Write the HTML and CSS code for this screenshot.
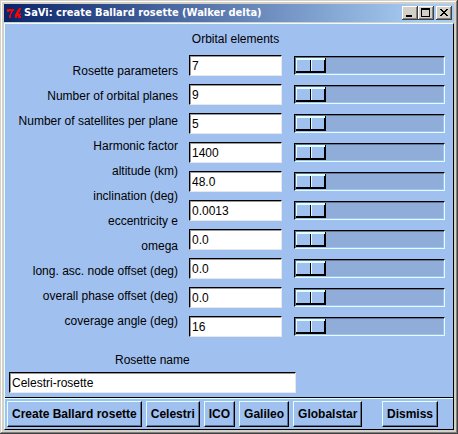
FILE: index.html
```html
<!DOCTYPE html>
<html lang="en">
<head>
<meta charset="utf-8">
<title>SaVi: create Ballard rosette (Walker delta)</title>
<link rel="stylesheet" href="styles.css">
</head>
<body>
<div class="window">
  <header class="titlebar">
    <svg class="logo" viewBox="0 0 15 11" width="15" height="11" aria-hidden="true">
      <path d="M0 1h7v2H6v1H5v2H4v4H2V7h1V5h1V3H2v1H0zM12 0h2v2h-1v2h-1v2h1V5h1v2h-1v1h1v2h-3V8h-1v2H8V6h1V4h1V2h1V1h1z"/>
    </svg>
    <h1 class="title">SaVi: create Ballard rosette (Walker delta)</h1>
    <div class="controls">
      <button class="control" type="button" aria-label="Minimize"><svg viewBox="0 0 12 10" width="12" height="10"><path d="M2 7h6v2H2z"/></svg></button>
      <button class="control" type="button" aria-label="Maximize"><svg viewBox="0 0 12 10" width="12" height="10"><path fill-rule="evenodd" d="M1 0h9v9H1zM2 2v6h7V2z"/></svg></button>
      <button class="control close" type="button" aria-label="Close"><svg viewBox="0 0 12 10" width="12" height="10"><path d="M2 1h2v1h1v1h2V2h1V1h2v1H9v1H8v1H7v1h1v1h1v1h1v1H8V7H7V6H5v1H4v1H2V7h1V6h1V5h1V4H4V3H3V2H2z"/></svg></button>
    </div>
  </header>
  <form class="client">
    <div class="panel">
      <div class="names">
        <span>Rosette parameters</span>
        <label for="planes">Number of orbital planes</label>
        <label for="sats">Number of satellites per plane</label>
        <label for="harmonic">Harmonic factor</label>
        <label for="altitude">altitude (km)</label>
        <label for="inclination">inclination (deg)</label>
        <label for="ecc">eccentricity e</label>
        <label for="omega">omega</label>
        <label for="node">long. asc. node offset (deg)</label>
        <label for="phase">overall phase offset (deg)</label>
        <label for="coverage">coverage angle (deg)</label>
      </div>
      <div class="values">
        <span class="heading">Orbital elements</span>
        <input class="entry" id="planes" value="7">
        <input class="entry" id="sats" value="9">
        <input class="entry" id="harmonic" value="5">
        <input class="entry" id="altitude" value="1400">
        <input class="entry" id="inclination" value="48.0">
        <input class="entry" id="ecc" value="0.0013">
        <input class="entry" id="omega" value="0.0">
        <input class="entry" id="node" value="0.0">
        <input class="entry" id="phase" value="0.0">
        <input class="entry" id="coverage" value="16">
      </div>
      <div class="sliders">
        <input class="slider" type="range" value="0" aria-label="Number of orbital planes">
        <input class="slider" type="range" value="0" aria-label="Number of satellites per plane">
        <input class="slider" type="range" value="0" aria-label="Harmonic factor">
        <input class="slider" type="range" value="0" aria-label="altitude (km)">
        <input class="slider" type="range" value="0" aria-label="inclination (deg)">
        <input class="slider" type="range" value="0" aria-label="eccentricity e">
        <input class="slider" type="range" value="0" aria-label="omega">
        <input class="slider" type="range" value="0" aria-label="long. asc. node offset (deg)">
        <input class="slider" type="range" value="0" aria-label="overall phase offset (deg)">
        <input class="slider" type="range" value="0" aria-label="coverage angle (deg)">
      </div>
    </div>
    <div class="rosette">
      <label for="name">Rosette name</label>
      <input class="entry" id="name" value="Celestri-rosette">
    </div>
    <div class="actions">
      <button class="action" type="button">Create Ballard rosette</button>
      <button class="action" type="button">Celestri</button>
      <button class="action" type="button">ICO</button>
      <button class="action" type="button">Galileo</button>
      <button class="action" type="button">Globalstar</button>
      <button class="action dismiss" type="button">Dismiss</button>
    </div>
  </form>
</div>
</body>
</html>
```
FILE: styles.css
```css
* { box-sizing: border-box; }

:root {
  --face: #d4d0c8;
  --blue: #a0c0f0;
  --light: #e0ffff;
  --shade: #607390;
}

body {
  margin: 0;
  background: var(--face);
  color: #000;
  font: 12px/15px "Liberation Sans", Arial, sans-serif;
}

input, button { font: inherit; color: inherit; margin: 0; }

.window {
  min-height: 100vh;
  display: flex;
  flex-direction: column;
  padding: 4px;
  background: var(--face);
  box-shadow: inset -1px -1px #404040, inset 1px 1px var(--face),
    inset -2px -2px #808080, inset 2px 2px #fff;
}

.titlebar {
  display: flex;
  align-items: center;
  height: 18px;
  padding: 0 2px 0 3px;
  background: linear-gradient(to right, #0a246a, #a6caf0 92%);
}

.logo { flex: none; fill: #f00; }

.title {
  flex: 1;
  margin: 0 0 0 2px;
  color: #fff;
  font: bold 11px/16px "DejaVu Sans Condensed", "Noto Sans", sans-serif;
  white-space: nowrap;
}

.controls { display: flex; }

.control {
  display: block;
  width: 16px;
  height: 14px;
  padding: 2px;
  border: 0;
  background: var(--face);
  box-shadow: inset -1px -1px #404040, inset 1px 1px #fff, inset -2px -2px #808080;
}

.control svg { display: block; shape-rendering: crispEdges; }
.close { margin-left: 2px; }

.client {
  flex: 1;
  display: flex;
  flex-direction: column;
  margin-top: 1px;
  border: 1px solid;
  border-color: var(--light) #000 #000 var(--light);
  background: var(--blue);
}

.panel {
  display: grid;
  grid-template-columns: 173px 93px 1fr;
  padding: 8px 8px 0 0;
}

.names {
  display: flex;
  flex-direction: column;
  gap: 10px;
  padding-top: 32px;
  text-align: right;
}

.values, .sliders { display: flex; flex-direction: column; }
.values { gap: 8px; margin-left: 11px; margin-right: -11px; }
.heading { text-align: center; white-space: nowrap; }

.entry {
  width: 100%;
  height: 21px;
  padding: 0 2px;
  border: 1px solid;
  border-color: #000 #e8e8e8 #e8e8e8 #000;
  border-radius: 0;
  background: #fff;
  box-shadow: inset 1px 1px #999;
  outline: 0;
}

.sliders { gap: 10px; margin-left: 23px; padding-top: 24px; }

.slider {
  appearance: none;
  width: 100%;
  height: 19px;
  border: 1px solid;
  border-color: #000 var(--light) var(--light) #000;
  background: #90acd8;
  box-shadow: inset 1px 1px var(--shade), inset -1px -1px var(--blue);
  padding: 1px;
}

.slider::-webkit-slider-thumb {
  appearance: none;
  width: 30px;
  height: 15px;
  background:
    linear-gradient(#000, #000) 14px 1px / 1px 12px no-repeat,
    linear-gradient(var(--light), var(--light)) 15px 1px / 1px 12px no-repeat,
    var(--blue);
  border: 0;
  box-shadow: inset -1px -2px #000, inset 1px 2px var(--light), inset -2px -2px #000;
}

.rosette {
  display: flex;
  flex-direction: column;
  gap: 4px;
  width: 64%;
  margin: 16px 0 4px 4px;
  text-align: center;
}

.actions {
  display: flex;
  gap: 4px;
  margin-top: auto;
  padding: 3px 15px 2px 2px;
  border-top: 1px solid #000;
  box-shadow: inset 0 1px var(--light);
}

.action {
  height: 26px;
  padding: 0 4px;
  border: 1px solid;
  border-color: var(--light) #000 #000 var(--light);
  background: var(--blue);
  box-shadow: inset -1px -1px var(--shade);
  font-weight: bold;
  white-space: nowrap;
}

.dismiss { margin-left: auto; }
```
